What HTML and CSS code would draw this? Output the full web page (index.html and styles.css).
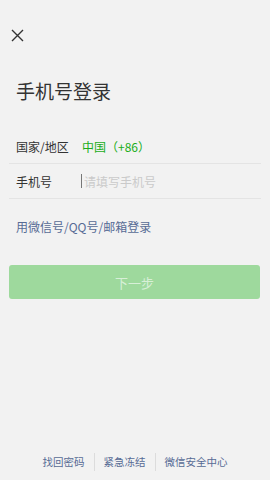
FILE: index.html
```html
<!DOCTYPE html>
<html lang="zh-CN">
<head>
<meta charset="utf-8">
<title>手机号登录</title>
<link rel="stylesheet" href="styles.css">
</head>
<body>
<div class="page">
  <svg class="close" width="13" height="13" viewBox="0 0 13 13"><path d="M1 1L12 12M12 1L1 12" stroke="#333" stroke-width="1.4" fill="none"/></svg>
  <h1 class="title">手机号登录</h1>
  <div class="form">
    <div class="row">
      <span class="label">国家/地区</span>
      <span class="country">中国（+86）</span>
    </div>
    <div class="row">
      <span class="label">手机号</span>
      <span class="caret"></span><span class="placeholder">请填写手机号</span>
    </div>
  </div>
  <a class="link">用微信号/QQ号/邮箱登录</a>
  <div class="btn">下一步</div>
  <div class="footer">
    <span class="foot-item">找回密码</span>
    <span class="foot-item">紧急冻结</span>
    <span class="foot-item">微信安全中心</span>
  </div>
</div>
</body>
</html>
```
FILE: styles.css
```css
html, body {
  margin: 0;
  padding: 0;
  background: #f2f2f2;
  font-family: "Noto Sans CJK SC", "Noto Sans", sans-serif;
}
.page {
  height: 480px;
  display: flex;
  flex-direction: column;
}
.close {
  display: block;
  margin: 29px 0 0 11px;
}
.title {
  margin: 36px 0 0 16px;
  font-size: 19px;
  line-height: 26px;
  font-weight: normal;
  color: #333;
}
.form {
  margin: 25px 9px 0 9px;
}
.row {
  display: flex;
  align-items: center;
  height: 34px;
  border-bottom: 1px solid #e4e4e4;
  padding-left: 7px;
  font-size: 12px;
}
.label {
  width: 66px;
  color: #333;
}
.country {
  color: #1aad19;
}
.caret {
  width: 1px;
  height: 14px;
  background: #777;
  margin-left: -1px;
  margin-right: 2px;
}
.placeholder {
  color: #cacaca;
}
.link {
  margin: 18px 0 0 16px;
  font-size: 12px;
  line-height: 20px;
  color: #576b95;
}
.btn {
  margin: 28px 10px 0 9px;
  height: 34px;
  border-radius: 3px;
  background: #9ed99d;
  color: rgba(255, 255, 255, 0.6);
  font-size: 13px;
  display: flex;
  align-items: center;
  justify-content: center;
}
.footer {
  margin-top: auto;
  margin-bottom: 9px;
  display: flex;
  justify-content: center;
}
.foot-item {
  font-size: 10.5px;
  line-height: 18px;
  color: #576b95;
  padding: 0 9px;
}
.foot-item + .foot-item {
  border-left: 1px solid #dcdcdc;
}
```
